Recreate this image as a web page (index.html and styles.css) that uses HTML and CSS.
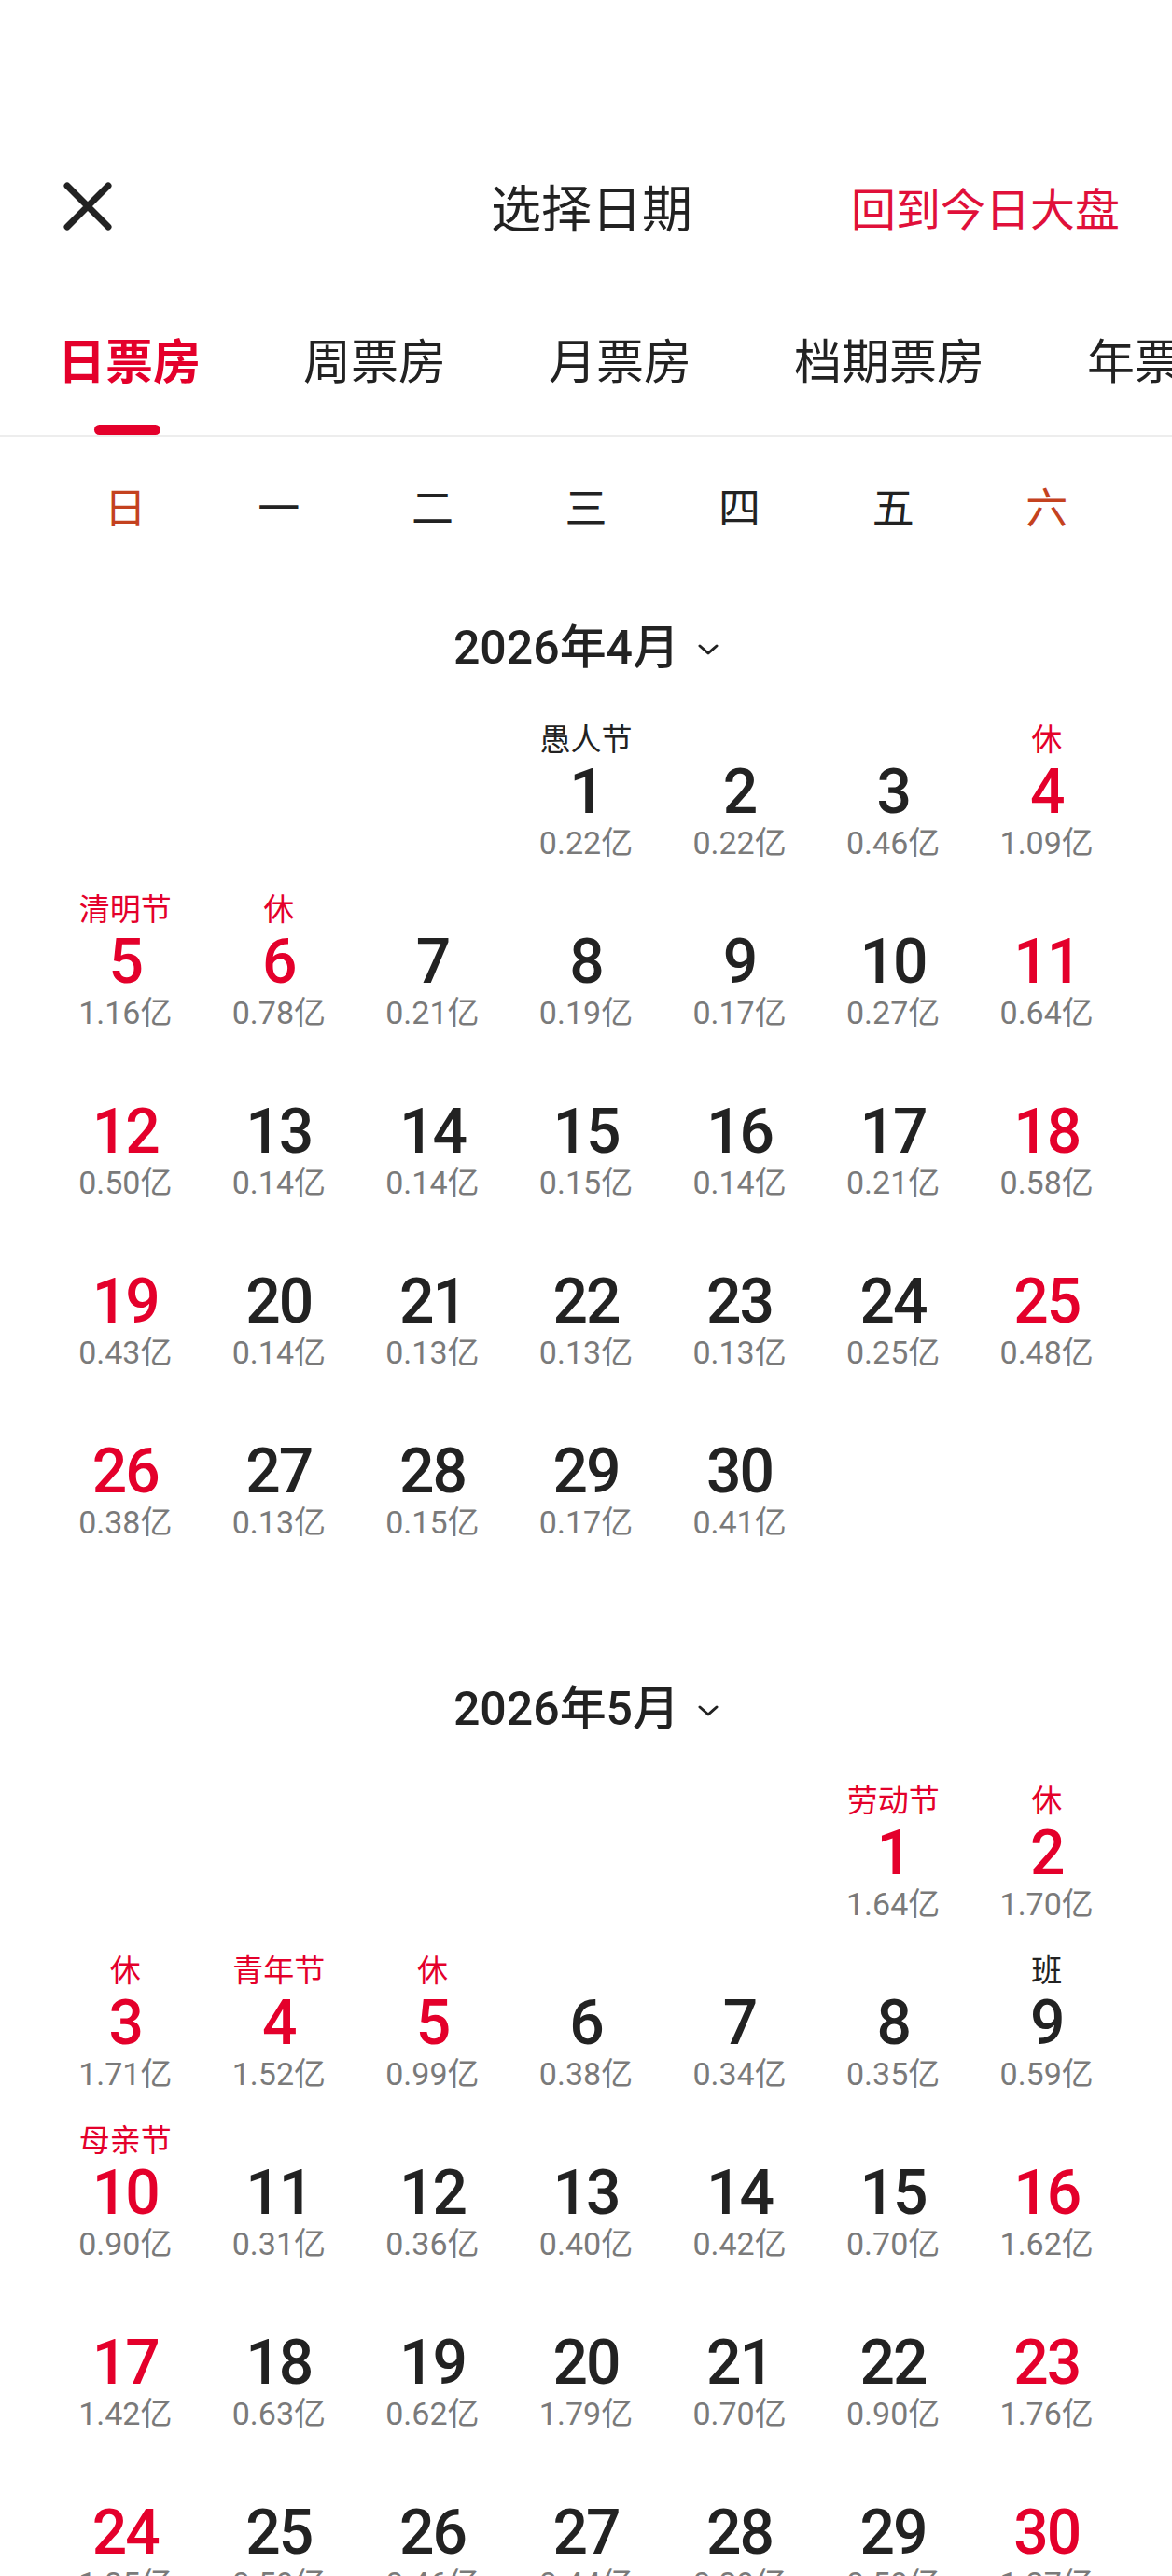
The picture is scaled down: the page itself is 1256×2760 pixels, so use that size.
FILE: index.html
```html
<!DOCTYPE html>
<html lang="zh-CN">
<head>
<meta charset="utf-8">
<title>选择日期</title>
<link rel="stylesheet" href="styles.css">
</head>
<body>
<div class="page">
  <div class="status-bar"></div>
  <header class="nav">
    <button class="nav-close" aria-label="关闭">
      <svg width="52" height="52" viewBox="0 0 52 52"><path d="M4 4 L48 48 M48 4 L4 48" stroke="#222" stroke-width="7" stroke-linecap="round" fill="none"/></svg>
    </button>
    <h1 class="nav-title">选择日期</h1>
    <a class="nav-link">回到今日大盘</a>
  </header>
  <nav class="tabs">
    <span class="tab active">日票房</span>
    <span class="tab">周票房</span>
    <span class="tab">月票房</span>
    <span class="tab">档期票房</span>
    <span class="tab">年票房</span>
  </nav>
  <div class="weekdays">
    <span class="wk weekend">日</span><span class="wk">一</span><span class="wk">二</span><span class="wk">三</span><span class="wk">四</span><span class="wk">五</span><span class="wk weekend">六</span>
  </div>

  <section class="month">
    <div class="month-head">2026年4月<svg class="chev" width="22" height="12" viewBox="0 0 22 12"><path d="M2 2 L11 10 L20 2" stroke="#222" stroke-width="3" fill="none" stroke-linecap="round" stroke-linejoin="round"/></svg></div>
    <div class="grid">
      <div class="cell empty"></div><div class="cell empty"></div><div class="cell empty"></div>
      <div class="cell"><span class="lbl">愚人节</span><span class="num">1</span><span class="amt">0.22亿</span></div>
      <div class="cell"><span class="lbl"></span><span class="num">2</span><span class="amt">0.22亿</span></div>
      <div class="cell"><span class="lbl"></span><span class="num">3</span><span class="amt">0.46亿</span></div>
      <div class="cell red"><span class="lbl red">休</span><span class="num">4</span><span class="amt">1.09亿</span></div>

      <div class="cell red"><span class="lbl red">清明节</span><span class="num">5</span><span class="amt">1.16亿</span></div>
      <div class="cell red"><span class="lbl red">休</span><span class="num">6</span><span class="amt">0.78亿</span></div>
      <div class="cell"><span class="lbl"></span><span class="num">7</span><span class="amt">0.21亿</span></div>
      <div class="cell"><span class="lbl"></span><span class="num">8</span><span class="amt">0.19亿</span></div>
      <div class="cell"><span class="lbl"></span><span class="num">9</span><span class="amt">0.17亿</span></div>
      <div class="cell"><span class="lbl"></span><span class="num">10</span><span class="amt">0.27亿</span></div>
      <div class="cell red"><span class="lbl"></span><span class="num">11</span><span class="amt">0.64亿</span></div>

      <div class="cell red"><span class="lbl"></span><span class="num">12</span><span class="amt">0.50亿</span></div>
      <div class="cell"><span class="lbl"></span><span class="num">13</span><span class="amt">0.14亿</span></div>
      <div class="cell"><span class="lbl"></span><span class="num">14</span><span class="amt">0.14亿</span></div>
      <div class="cell"><span class="lbl"></span><span class="num">15</span><span class="amt">0.15亿</span></div>
      <div class="cell"><span class="lbl"></span><span class="num">16</span><span class="amt">0.14亿</span></div>
      <div class="cell"><span class="lbl"></span><span class="num">17</span><span class="amt">0.21亿</span></div>
      <div class="cell red"><span class="lbl"></span><span class="num">18</span><span class="amt">0.58亿</span></div>

      <div class="cell red"><span class="lbl"></span><span class="num">19</span><span class="amt">0.43亿</span></div>
      <div class="cell"><span class="lbl"></span><span class="num">20</span><span class="amt">0.14亿</span></div>
      <div class="cell"><span class="lbl"></span><span class="num">21</span><span class="amt">0.13亿</span></div>
      <div class="cell"><span class="lbl"></span><span class="num">22</span><span class="amt">0.13亿</span></div>
      <div class="cell"><span class="lbl"></span><span class="num">23</span><span class="amt">0.13亿</span></div>
      <div class="cell"><span class="lbl"></span><span class="num">24</span><span class="amt">0.25亿</span></div>
      <div class="cell red"><span class="lbl"></span><span class="num">25</span><span class="amt">0.48亿</span></div>

      <div class="cell red"><span class="lbl"></span><span class="num">26</span><span class="amt">0.38亿</span></div>
      <div class="cell"><span class="lbl"></span><span class="num">27</span><span class="amt">0.13亿</span></div>
      <div class="cell"><span class="lbl"></span><span class="num">28</span><span class="amt">0.15亿</span></div>
      <div class="cell"><span class="lbl"></span><span class="num">29</span><span class="amt">0.17亿</span></div>
      <div class="cell"><span class="lbl"></span><span class="num">30</span><span class="amt">0.41亿</span></div>
    </div>
  </section>

  <section class="month">
    <div class="month-head">2026年5月<svg class="chev" width="22" height="12" viewBox="0 0 22 12"><path d="M2 2 L11 10 L20 2" stroke="#222" stroke-width="3" fill="none" stroke-linecap="round" stroke-linejoin="round"/></svg></div>
    <div class="grid">
      <div class="cell empty"></div><div class="cell empty"></div><div class="cell empty"></div><div class="cell empty"></div><div class="cell empty"></div>
      <div class="cell red"><span class="lbl red">劳动节</span><span class="num">1</span><span class="amt">1.64亿</span></div>
      <div class="cell red"><span class="lbl red">休</span><span class="num">2</span><span class="amt">1.70亿</span></div>

      <div class="cell red"><span class="lbl red">休</span><span class="num">3</span><span class="amt">1.71亿</span></div>
      <div class="cell red"><span class="lbl red">青年节</span><span class="num">4</span><span class="amt">1.52亿</span></div>
      <div class="cell red"><span class="lbl red">休</span><span class="num">5</span><span class="amt">0.99亿</span></div>
      <div class="cell"><span class="lbl"></span><span class="num">6</span><span class="amt">0.38亿</span></div>
      <div class="cell"><span class="lbl"></span><span class="num">7</span><span class="amt">0.34亿</span></div>
      <div class="cell"><span class="lbl"></span><span class="num">8</span><span class="amt">0.35亿</span></div>
      <div class="cell"><span class="lbl">班</span><span class="num">9</span><span class="amt">0.59亿</span></div>

      <div class="cell red"><span class="lbl red">母亲节</span><span class="num">10</span><span class="amt">0.90亿</span></div>
      <div class="cell"><span class="lbl"></span><span class="num">11</span><span class="amt">0.31亿</span></div>
      <div class="cell"><span class="lbl"></span><span class="num">12</span><span class="amt">0.36亿</span></div>
      <div class="cell"><span class="lbl"></span><span class="num">13</span><span class="amt">0.40亿</span></div>
      <div class="cell"><span class="lbl"></span><span class="num">14</span><span class="amt">0.42亿</span></div>
      <div class="cell"><span class="lbl"></span><span class="num">15</span><span class="amt">0.70亿</span></div>
      <div class="cell red"><span class="lbl"></span><span class="num">16</span><span class="amt">1.62亿</span></div>

      <div class="cell red"><span class="lbl"></span><span class="num">17</span><span class="amt">1.42亿</span></div>
      <div class="cell"><span class="lbl"></span><span class="num">18</span><span class="amt">0.63亿</span></div>
      <div class="cell"><span class="lbl"></span><span class="num">19</span><span class="amt">0.62亿</span></div>
      <div class="cell"><span class="lbl"></span><span class="num">20</span><span class="amt">1.79亿</span></div>
      <div class="cell"><span class="lbl"></span><span class="num">21</span><span class="amt">0.70亿</span></div>
      <div class="cell"><span class="lbl"></span><span class="num">22</span><span class="amt">0.90亿</span></div>
      <div class="cell red"><span class="lbl"></span><span class="num">23</span><span class="amt">1.76亿</span></div>

      <div class="cell red"><span class="lbl"></span><span class="num">24</span><span class="amt">1.35亿</span></div>
      <div class="cell"><span class="lbl"></span><span class="num">25</span><span class="amt">0.59亿</span></div>
      <div class="cell"><span class="lbl"></span><span class="num">26</span><span class="amt">0.46亿</span></div>
      <div class="cell"><span class="lbl"></span><span class="num">27</span><span class="amt">0.44亿</span></div>
      <div class="cell"><span class="lbl"></span><span class="num">28</span><span class="amt">0.39亿</span></div>
      <div class="cell"><span class="lbl"></span><span class="num">29</span><span class="amt">0.59亿</span></div>
      <div class="cell red"><span class="lbl"></span><span class="num">30</span><span class="amt">1.27亿</span></div>

      <div class="cell red"><span class="lbl"></span><span class="num">31</span><span class="amt">1.30亿</span></div>
    </div>
  </section>
</div>
</body>
</html>
```

FILE: styles.css
```css
* { box-sizing: border-box; }

html, body {
  margin: 0;
  padding: 0;
  background: #fff;
}

body {
  font-family: Roboto, "Noto Sans CJK SC", sans-serif;
  color: #222;
}

.page {
  width: 1256px;
  overflow: hidden;
}

.status-bar {
  height: 167px;
}

/* top navigation */
.nav {
  height: 108px;
  display: grid;
  grid-template-columns: 1fr auto 1fr;
  align-items: center;
  padding: 0 56px 0 68px;
}

.nav-close {
  justify-self: start;
  width: 52px;
  height: 52px;
  padding: 0;
  border: 0;
  background: none;
  display: flex;
}

.nav-title {
  margin: 0;
  font-family: "Noto Sans CJK SC", sans-serif;
  font-size: 54px;
  font-weight: 400;
  line-height: 70px;
  color: #222;
}

.nav-link {
  justify-self: end;
  font-family: "Noto Sans CJK SC", sans-serif;
  font-size: 48px;
  line-height: 64px;
  color: #e0103a;
}

/* tabs */
.tabs {
  display: flex;
  gap: 110px;
  padding-left: 62px;
  white-space: nowrap;
  border-bottom: 2px solid #ededed;
}

.tab {
  position: relative;
  flex: none;
  padding: 73px 0 46px;
  font-family: "Noto Sans CJK SC", sans-serif;
  font-size: 51px;
  line-height: 72px;
  color: #222;
}

.tab.active {
  color: #e4002b;
  font-weight: 700;
}

.tab.active::after {
  content: "";
  position: absolute;
  left: 50%;
  bottom: 0;
  width: 71px;
  height: 11px;
  margin-left: -38px;
  border-radius: 6px;
  background: #e4002b;
}

/* weekday header */
.weekdays {
  display: grid;
  grid-template-columns: repeat(7, 1fr);
  padding: 49px 52px 56px;
}

.wk {
  text-align: center;
  font-family: "Noto Sans CJK SC", sans-serif;
  font-size: 45px;
  line-height: 50px;
  color: #222;
}

.wk.weekend {
  color: #c4421f;
}

/* months */
.month + .month {
  margin-top: 82px;
}

.month-head {
  display: flex;
  justify-content: center;
  align-items: center;
  padding: 40px 0 43px;
  font-size: 50px;
  font-weight: 500;
  line-height: 62px;
  color: #222;
}

.chev {
  margin-left: 20px;
  margin-top: 4px;
}

.grid {
  display: grid;
  grid-template-columns: repeat(7, 1fr);
  padding: 0 52px;
}

.cell {
  height: 182px;
  display: flex;
  flex-direction: column;
  align-items: center;
}

.lbl {
  height: 44px;
  font-family: "Noto Sans CJK SC", sans-serif;
  font-size: 33px;
  line-height: 44px;
  color: #222;
}

.lbl.red {
  color: #e4002b;
}

.num {
  font-size: 66px;
  font-weight: 500;
  line-height: 74px;
  letter-spacing: -2px;
  color: #222;
}

.cell.red .num {
  color: #e4002b;
}

.amt {
  font-size: 34px;
  line-height: 34px;
  color: #7a7a7a;
}
```
